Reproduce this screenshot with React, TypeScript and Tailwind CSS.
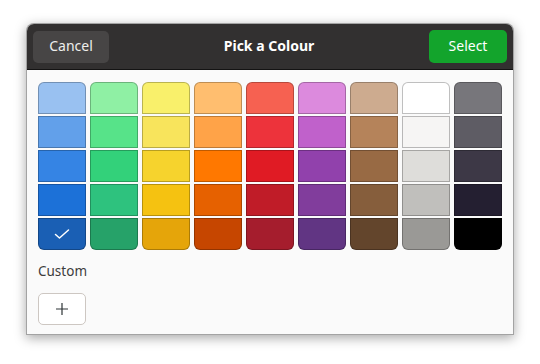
const rows: string[][] = [
  ["#99c1f1", "#8ff0a4", "#f9f06b", "#ffbe6f", "#f66151", "#dc8add", "#cdab8f", "#ffffff", "#77767b"],
  ["#62a0ea", "#57e389", "#f8e45c", "#ffa348", "#ed333b", "#c061cb", "#b5835a", "#f6f5f4", "#5e5c64"],
  ["#3584e4", "#33d17a", "#f6d32d", "#ff7800", "#e01b24", "#9141ac", "#986a44", "#deddda", "#3d3846"],
  ["#1c71d8", "#2ec27e", "#f5c211", "#e66100", "#c01c28", "#813d9c", "#865e3c", "#c0bfbc", "#241f31"],
  ["#1a5fb4", "#26a269", "#e5a50a", "#c64600", "#a51d2d", "#613583", "#63452c", "#9a9996", "#000000"],
];

function Swatch({ color, row, selected }: { color: string; row: number; selected: boolean }) {
  const shape =
    row === 0 ? "rounded-t-[6px]" : row === rows.length - 1 ? "rounded-b-[6px]" : "";
  return (
    <div
      className={`flex h-[32px] w-[48px] items-center justify-center border border-black/25 ${shape}`}
      style={{ backgroundColor: color }}
    >
      {selected && (
        <svg width="16" height="16" viewBox="0 0 16 16" fill="none">
          <path d="M1.5 8.5l4 3.5 9-8" stroke="white" strokeWidth="1.5" strokeLinecap="round" strokeLinejoin="round" />
        </svg>
      )}
    </div>
  );
}

export default function App() {
  return (
    <div className="h-[364px] w-[540px] bg-white pt-[23px] pl-[26px] font-['Noto_Sans',sans-serif]">
      <div className="flex h-[312px] w-[488px] flex-col overflow-hidden rounded-t-[8px] border border-black/35 bg-[#fafafa] shadow-[0_3px_12px_rgba(0,0,0,0.35)]">
        {/* header */}
        <div className="flex h-[46px] shrink-0 items-center justify-between border-b border-black/60 bg-[#323030] px-[6px]">
          <button className="h-[32px] w-[76px] rounded-[5px] bg-[#474545] pb-[2px] text-[14px] text-[#eeeeec]">Cancel</button>
          <span className="pb-[2px] text-[14px] font-bold text-white">Pick a Colour</span>
          <button className="h-[33px] w-[78px] rounded-[5px] bg-[#13a42c] pb-[2px] text-[14px] text-white">Select</button>
        </div>

        {/* palette */}
        <div className="flex flex-col px-[11px] pt-[12px]">
          <div className="flex flex-col gap-[2px]">
            {rows.map((r, i) => (
              <div key={i} className="flex gap-[4px]">
                {r.map((c, j) => (
                  <Swatch key={c} color={c} row={i} selected={i === 4 && j === 0} />
                ))}
              </div>
            ))}
          </div>
          <div className="mt-[12px] text-[13.5px] leading-[18px] text-[#3d3d3d]">Custom</div>
          <button className="mt-[13px] flex h-[32px] w-[48px] items-center justify-center rounded-[5px] border border-[#cdc7c2] bg-white">
            <svg width="14" height="14" viewBox="0 0 14 14">
              <path d="M7 1v12M1 7h12" stroke="#2e3436" strokeWidth="1.2" />
            </svg>
          </button>
        </div>
      </div>
    </div>
  );
}
